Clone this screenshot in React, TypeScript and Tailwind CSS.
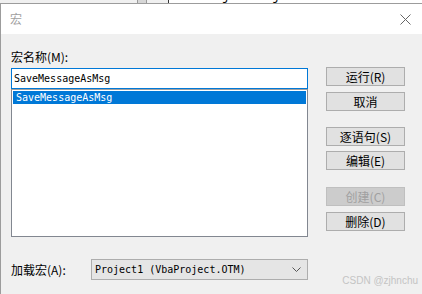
import { ReactNode } from "react";

const cjk = "font-['Noto_Sans_CJK_SC','Noto_Sans',sans-serif]";

function Btn({ children, disabled, className = "" }: { children: ReactNode; disabled?: boolean; className?: string }) {
  return (
    <div
      className={`h-[19px] w-[79px] flex items-center justify-center border text-[12px] leading-none ${cjk} ${
        disabled ? "border-[#bfbfbf] bg-[#cccccc] text-[#a0a0a0]" : "border-[#adadad] bg-[#e1e1e1] text-black"
      } ${className}`}
    >
      {children}
    </div>
  );
}

export default function App() {
  return (
    <div className="relative w-[422px] h-[294px] overflow-hidden bg-[#f0f0f0] flex flex-col">
      {/* editor behind the dialog, only a sliver is visible */}
      <div className="h-[3px] flex overflow-hidden shrink-0">
        <div className="w-[137px] bg-[#f0f0f0]" />
        <div className="w-[10px] bg-[#d6d6d6] border-x border-[#9a9a9a]" />
        <div className="w-[22px] bg-[#f0f0f0] border-r border-[#333]" />
        <div className="flex-1 bg-white flex items-end overflow-hidden">
          <span className="font-mono text-[12px] leading-[12px] ml-[10px] whitespace-nowrap text-[#00008b]">
            Dim <span className="text-black">objDataObject</span> As <span className="text-black">Data</span>
          </span>
        </div>
      </div>

      {/* dialog */}
      <div className="flex-1 flex flex-col border-l border-t border-[#9c9c9c]">
        <div className="h-[30px] bg-white flex items-center justify-between pl-[9px] pr-[10px] shrink-0">
          <span className={`text-[12px] text-[#a0a0a0] ${cjk}`}>宏</span>
          <svg width="11" height="11" viewBox="0 0 11 11" className="mr-[1px]">
            <path d="M0.5 0.5 L10.5 10.5 M10.5 0.5 L0.5 10.5" stroke="#666" strokeWidth="1" fill="none" />
          </svg>
        </div>

        <div className="flex-1 flex flex-col pl-[10px] pt-[15px]">
          <div className="flex items-start">
            <div className="w-[297px] flex flex-col">
              <div className={`h-[16px] text-[12px] leading-[16px] text-black ${cjk}`}>宏名称(M):</div>
              <div className="mt-[3px] h-[21px] border border-[#0078d7] bg-white flex items-center pl-[2px]">
                <div className="font-['DejaVu_Sans_Mono',monospace] text-[10px] leading-[13px] whitespace-nowrap text-black">
                  SaveMessageAsMsg
                </div>
              </div>
              <div className="h-[148px] border border-[#828790] border-t-[#a0a0a0] bg-white p-[1px]">
                <div className="h-[13px] bg-[#0078d7] flex items-center pl-[3px]">
                  <div className="font-['DejaVu_Sans_Mono',monospace] text-[10px] leading-[13px] whitespace-nowrap text-white">
                    SaveMessageAsMsg
                  </div>
                </div>
              </div>
            </div>
            <div className="ml-[18px] mt-[18px] flex flex-col">
              <Btn>运行(R)</Btn>
              <Btn className="mt-[6px]">取消</Btn>
              <Btn className="mt-[16px]">逐语句(S)</Btn>
              <Btn className="mt-[5px]">编辑(E)</Btn>
              <Btn disabled className="mt-[17px]">创建(C)</Btn>
              <Btn className="mt-[6px]">删除(D)</Btn>
            </div>
          </div>

          <div className="flex items-center mt-[22px]">
            <div className={`w-[80px] text-[12px] text-black ${cjk}`}>加载宏(A):</div>
            <div className="w-[217px] h-[21px] border border-[#adadad] bg-[#e5e5e5] flex items-center justify-between pl-[3px] pr-[6px]">
              <div className="font-['DejaVu_Sans_Mono',monospace] text-[10px] leading-[13px] whitespace-nowrap text-black">
                Project1 (VbaProject.OTM)
              </div>
              <svg width="9" height="5" viewBox="0 0 9 5">
                <path d="M0.5 0.5 L4.5 4.5 L8.5 0.5" stroke="#555" strokeWidth="1" fill="none" />
              </svg>
            </div>
          </div>
        </div>
      </div>

      <span className="absolute right-[4px] bottom-[6px] text-[10px] text-[#c4c4c4] font-['Liberation_Sans',sans-serif]">
        CSDN @zjhnchu
      </span>
    </div>
  );
}
